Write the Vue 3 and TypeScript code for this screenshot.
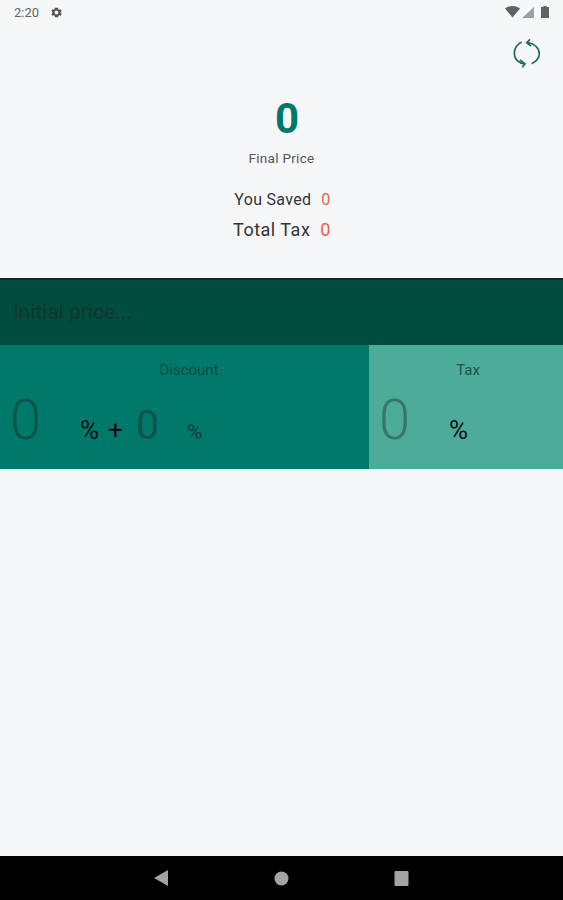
<script setup lang="ts">
const finalPrice = 0
const saved = 0
const totalTax = 0
</script>

<template>
  <div class="screen">
    <div class="status">
      <div class="status-left">
        <span class="time">2:20</span>
        <svg class="gear" width="13" height="13" viewBox="0 0 24 24">
          <path fill="#4f5356" fill-rule="evenodd" d="M19.4 13a7.500 7.500 0 0 0 0-2l2.100-1.600-2-3.500-2.500 1a7.500 7.500 0 0 0-1.700-1L15 3.200h-6l-.4 2.700a7.500 7.500 0 0 0-1.700 1l-2.500-1-2 3.500L4.600 11a7.500 7.500 0 0 0 0 2l-2.100 1.600 2 3.500 2.500-1a7.500 7.500 0 0 0 1.700 1l.4 2.700h6l.4-2.700a7.500 7.500 0 0 0 1.700-1l2.500 1 2-3.500zM12 15.500a3.500 3.500 0 1 1 0-7 3.500 3.500 0 0 1 0 7z" />
        </svg>
      </div>
      <div class="status-right">
        <svg width="15" height="12" viewBox="0 0 15 12"><path fill="#5f6368" d="M0 2.500C2 .9 4.600 0 7.500 0s5.500.9 7.500 2.500L7.500 11.500z" /></svg>
        <svg width="12" height="11" viewBox="0 0 12 11"><path fill="#9aa0a6" d="M12 0v11H0z" /></svg>
        <svg class="battery" width="8" height="12" viewBox="0 0 8 12"><path fill="#5f6368" d="M2.500 0h3v1H8v11H0V1h2.500z" /></svg>
      </div>
    </div>

    <div class="summary">
      <button class="refresh" type="button" aria-label="Reset">
        <svg width="28" height="30" viewBox="0 0 28 30" fill="none" stroke="#1f6b5e" stroke-width="1.700">
          <path d="M8.700 4C3.500 6.500 1.300 11 1.300 15.700c0 4.800 4 9.500 10.200 10.200" />
          <path d="M7 22l5 3.800-2.700 3.400" />
          <path d="M18.700 25.700c5.300-2.700 7.600-5.700 7.600-10 0-5.700-5.300-10.500-11.500-11" />
          <path d="M17 1.300l-3.300 3.400L18 8" />
        </svg>
      </button>
      <div class="final">{{ finalPrice }}</div>
      <div class="final-label">Final Price</div>
      <div class="row saved">
        <span>You Saved</span>
        <span class="red">{{ saved }}</span>
      </div>
      <div class="row tax-row">
        <span>Total Tax</span>
        <span class="red">{{ totalTax }}</span>
      </div>
    </div>

    <div class="price-bar">Initial price...</div>

    <div class="inputs">
      <section class="discount">
        <div class="heading">Discount</div>
        <div class="fields">
          <span class="big">0</span>
          <span class="pct first">%</span>
          <span class="plus">+</span>
          <span class="mid">0</span>
          <span class="pct small">%</span>
        </div>
      </section>
      <section class="tax">
        <div class="heading">Tax</div>
        <div class="fields">
          <span class="big">0</span>
          <span class="pct first">%</span>
        </div>
      </section>
    </div>

    <div class="spacer" />

    <nav class="nav">
      <svg width="15" height="16" viewBox="0 0 15 16"><path fill="#a3a3a3" d="M14 0v16L0 8z" /></svg>
      <svg width="15" height="15" viewBox="0 0 15 15"><circle cx="7.500" cy="7.500" r="7" fill="#a3a3a3" /></svg>
      <svg width="15" height="15" viewBox="0 0 15 15"><rect width="14" height="15" x=".5" rx="1" fill="#a3a3a3" /></svg>
    </nav>
  </div>
</template>

<style>
html,
body {
  margin: 0;
  background: #f5f7f9;
}
</style>

<style scoped>
.screen {
  width: 563px;
  height: 900px;
  display: flex;
  flex-direction: column;
  background: #f5f7f9;
  font-family: Roboto, "Liberation Sans", sans-serif;
  overflow: hidden;
}

.status {
  height: 24px;
  padding: 0 14px;
  display: flex;
  justify-content: space-between;
  align-items: center;
  box-sizing: border-box;
}

.status-left {
  display: flex;
  align-items: center;
  gap: 11px;
}

.time {
  font-size: 13px;
  color: #5f6368;
}

.status-right {
  display: flex;
  align-items: center;
  gap: 2px;
}

.battery {
  margin-left: 5px;
}

.summary {
  position: relative;
  height: 254px;
  display: flex;
  flex-direction: column;
  align-items: center;
  box-sizing: border-box;
  padding-top: 71px;
}

.refresh {
  position: absolute;
  top: 14px;
  right: 22px;
  padding: 0;
  border: 0;
  background: none;
  display: flex;
}

.final {
  margin-left: 11px;
  font-size: 42px;
  line-height: 47px;
  font-weight: 700;
  color: #00796b;
}

.final-label {
  margin-top: 8px;
  font-size: 13.500px;
  line-height: 16px;
  letter-spacing: .3px;
  color: #555;
}

.row {
  display: flex;
  gap: 10px;
  color: #333;
}

.saved {
  margin-top: 23px;
  margin-left: 2px;
  font-size: 16px;
  line-height: 22px;
  letter-spacing: .3px;
}

.tax-row {
  margin-top: 8px;
  margin-left: 1px;
  font-size: 18px;
  line-height: 22px;
  letter-spacing: .5px;
}

.red {
  color: #e8604c;
}

.price-bar {
  height: 67px;
  box-sizing: border-box;
  border-top: 2px solid #0e2a24;
  background: #004d40;
  padding: 20px 0 0 13px;
  font-size: 21px;
  line-height: 24px;
  color: #14352f;
}

.inputs {
  display: flex;
  height: 124px;
}

.discount {
  width: 369px;
  background: #00796b;
}

.tax {
  flex: 1;
  background: #4dac99;
}

.heading {
  padding-top: 16px;
  padding-left: 9px;
  font-size: 15px;
  line-height: 18px;
  text-align: center;
  color: #0d4a41;
}

.tax .heading {
  color: #1f5148;
  padding-left: 4px;
}

.fields {
  display: flex;
  align-items: baseline;
  margin-top: 9px;
  padding-left: 10px;
  line-height: 64px;
}

.big {
  font-size: 56px;
  font-weight: 300;
  color: #0a5549;
}

.tax .big {
  color: #37756a;
}

.pct {
  font-size: 26px;
  font-weight: 400;
  color: #111;
}

.first {
  margin-left: 39px;
}

.plus {
  margin-left: 9px;
  font-size: 26px;
  font-weight: 400;
  color: #111;
}

.mid {
  margin-left: 13px;
  font-size: 41px;
  font-weight: 400;
  color: #0a5549;
}

.small {
  margin-left: 28px;
  font-size: 21px;
  color: #0e3c35;
}

.spacer {
  flex: 1;
}

.nav {
  height: 44px;
  background: #000;
  display: flex;
  align-items: center;
  justify-content: center;
  gap: 105px;
}
</style>
